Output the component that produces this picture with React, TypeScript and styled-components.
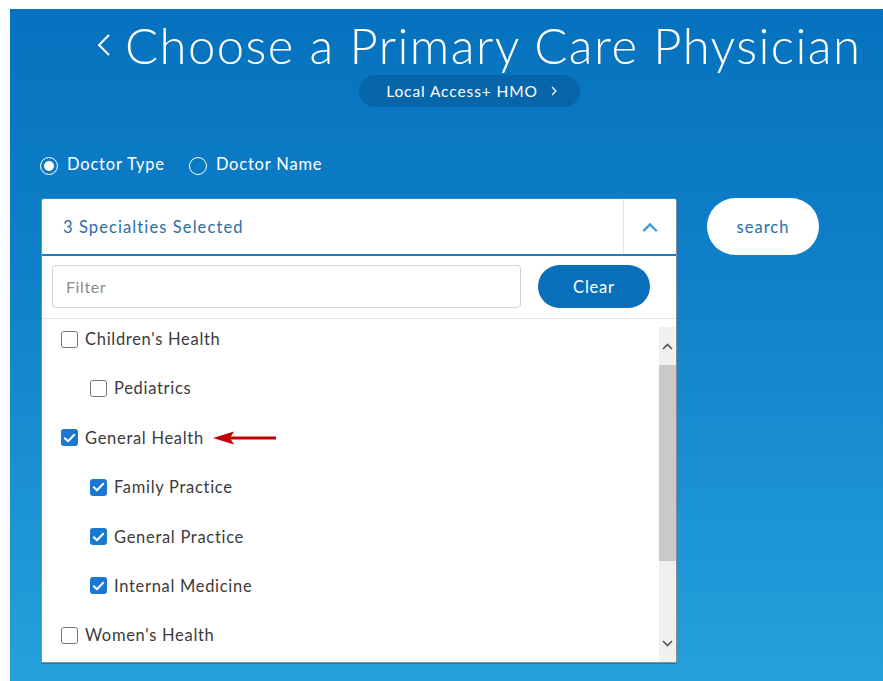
import React from "react";
import styled, { createGlobalStyle } from "styled-components";

const GlobalStyle = createGlobalStyle`
  html, body { margin: 0; padding: 0; background: #ffffff; }
  body { font-family: "Lato", "Open Sans", "Liberation Sans", sans-serif; }
  * { box-sizing: border-box; }
`;

const Page = styled.div`
  width: 883px;
  height: 681px;
  padding: 9px 0 0 10px;
  overflow: hidden;
`;

const Panel = styled.main`
  width: 873px;
  height: 672px;
  background: linear-gradient(180deg, #0672bf 0%, #0f80c9 40%, #26a1dc 100%);
  display: flex;
  flex-direction: column;
  align-items: flex-start;
  color: #ffffff;
  font-size: 16.5px;
  letter-spacing: 0.8px;
`;

const TitleRow = styled.h1`
  margin: 8px 0 0 87px;
  display: flex;
  align-items: center;
  gap: 14px;
  font-family: "Lato", "Open Sans", sans-serif;
  font-weight: 300;
  font-size: 49px;
  line-height: 56px;
  letter-spacing: 1.45px;
  white-space: nowrap;
`;

const PlanPill = styled.button`
  margin: 2px 0 0 349px;
  width: 221px;
  height: 32px;
  border: none;
  border-radius: 16px;
  background: #0765a9;
  color: #ffffff;
  font-family: "Lato", "Open Sans", sans-serif;
  font-size: 15.5px;
  letter-spacing: 0.9px;
  display: flex;
  align-items: center;
  justify-content: center;
  gap: 13px;
  padding: 0 0 0 4px;
`;

const RadioRow = styled.div`
  margin: 46px 0 0 30px;
  display: flex;
  align-items: center;
  gap: 24px;
`;

const RadioLabel = styled.label`
  display: flex;
  align-items: center;
  gap: 9px;
  color: #ffffff;
`;

const RadioMark = styled.span<{ $on?: boolean }>`
  width: 18px;
  height: 18px;
  margin-top: 4px;
  border-radius: 50%;
  border: 1.5px solid #ffffff;
  display: flex;
  align-items: center;
  justify-content: center;
  &::after {
    content: "";
    width: 10px;
    height: 10px;
    border-radius: 50%;
    background: ${(p) => (p.$on ? "#ffffff" : "transparent")};
  }
`;

const SearchRow = styled.div`
  margin: 23px 0 0 31px;
  display: flex;
  align-items: flex-start;
  gap: 30px;
`;

const Dropdown = styled.section`
  width: 636px;
  height: 465px;
  background: #ffffff;
  border: 1px solid #8a8f95;
  border-top-color: #2a86c8;
  border-radius: 3px 3px 0 0;
  display: flex;
  flex-direction: column;
  box-shadow: 0 1px 1px rgba(0, 0, 0, 0.25);
`;

const DropHeader = styled.div`
  height: 57px;
  display: flex;
  align-items: stretch;
  border-bottom: 2px solid #1b7cc4;
`;

const HeaderText = styled.div`
  flex: 1;
  display: flex;
  align-items: center;
  padding-left: 21px;
  color: #2a6ea5;
  letter-spacing: 1.1px;
`;

const Toggle = styled.div`
  width: 53px;
  display: flex;
  align-items: center;
  justify-content: center;
  border-left: 1px solid #e3e6ea;
`;

const FilterBar = styled.div`
  display: flex;
  align-items: center;
  gap: 17px;
  padding: 9px 26px 10px 10px;
  border-bottom: 1px solid #e2e5e8;
`;

const FilterInput = styled.input`
  width: 469px;
  height: 43px;
  border: 1px solid #cfd4d9;
  border-radius: 4px;
  padding: 0 13px;
  font-family: "Lato", "Open Sans", sans-serif;
  font-size: 16px;
  letter-spacing: 0.6px;
  color: #333;
  &::placeholder { color: #8a8d90; }
`;

const ClearButton = styled.button`
  width: 112px;
  height: 43px;
  border: none;
  border-radius: 22px;
  background: #0a6fba;
  color: #ffffff;
  font-family: "Lato", "Open Sans", sans-serif;
  font-size: 16.5px;
  letter-spacing: 0.8px;
`;

const ListArea = styled.div`
  flex: 1;
  margin-top: 8px;
  display: flex;
  min-height: 0;
`;

const List = styled.ul`
  flex: 1;
  margin: 0;
  padding: 0 0 0 19px;
  list-style: none;
  display: flex;
  flex-direction: column;
  gap: 25.4px;
`;

const Item = styled.li<{ $sub?: boolean }>`
  position: relative;
  height: 24px;
  display: flex;
  align-items: center;
  gap: 7px;
  padding-left: ${(p) => (p.$sub ? "29px" : "0")};
  color: #3b3b3b;
  letter-spacing: 0.7px;
`;

const Box = styled.span<{ $on?: boolean }>`
  width: 17px;
  height: 17px;
  border-radius: 3px;
  border: ${(p) => (p.$on ? "none" : "1.5px solid #767676")};
  background: ${(p) => (p.$on ? "#1a78d0" : "#ffffff")};
  display: flex;
  align-items: center;
  justify-content: center;
`;

const Annotation = styled.svg`
  position: absolute;
  left: 151px;
  top: 4px;
`;

const ScrollTrack = styled.div`
  width: 17px;
  background: #f0f0f0;
  display: flex;
  flex-direction: column;
`;

const ScrollArrow = styled.div`
  height: 38px;
  display: flex;
  align-items: center;
  justify-content: center;
`;

const ScrollThumb = styled.div`
  height: 196px;
  background: #c9c9c9;
`;

const Spacer = styled.div`
  flex: 1;
`;

const SearchButton = styled.button`
  width: 112px;
  height: 57px;
  border: none;
  border-radius: 29px;
  background: #ffffff;
  color: #2a6ea5;
  font-family: "Lato", "Open Sans", sans-serif;
  font-size: 16.5px;
  letter-spacing: 1px;
`;

const Check = () => (
  <svg width="13" height="10" viewBox="0 0 13 10">
    <path d="M1.8 5.2 L5 8.2 L11.2 1.8" fill="none" stroke="#fff" strokeWidth="2" strokeLinecap="round" strokeLinejoin="round" />
  </svg>
);

type Spec = { label: string; sub?: boolean; on?: boolean; flag?: boolean };

const specialties: Spec[] = [
  { label: "Children's Health" },
  { label: "Pediatrics", sub: true },
  { label: "General Health", on: true, flag: true },
  { label: "Family Practice", sub: true, on: true },
  { label: "General Practice", sub: true, on: true },
  { label: "Internal Medicine", sub: true, on: true },
  { label: "Women's Health" },
];

export default function App() {
  return (
    <>
      <GlobalStyle />
      <Page>
        <Panel>
          <TitleRow>
            <svg width="14" height="22" viewBox="0 0 14 22">
              <path d="M12 1 L2 11 L12 21" fill="none" stroke="#fff" strokeWidth="2" />
            </svg>
            Choose a Primary Care Physician
          </TitleRow>
          <PlanPill>
            Local Access+ HMO
            <svg width="6" height="10" viewBox="0 0 6 10">
              <path d="M1 1 L5 5 L1 9" fill="none" stroke="#fff" strokeWidth="1.2" />
            </svg>
          </PlanPill>
          <RadioRow>
            <RadioLabel>
              <RadioMark $on />
              Doctor Type
            </RadioLabel>
            <RadioLabel>
              <RadioMark />
              Doctor Name
            </RadioLabel>
          </RadioRow>
          <SearchRow>
            <Dropdown>
              <DropHeader>
                <HeaderText>3 Specialties Selected</HeaderText>
                <Toggle>
                  <svg width="16" height="10" viewBox="0 0 16 10">
                    <path d="M2 8.5 L8 2.5 L14 8.5" fill="none" stroke="#3f9ad8" strokeWidth="2.4" strokeLinecap="round" />
                  </svg>
                </Toggle>
              </DropHeader>
              <FilterBar>
                <FilterInput placeholder="Filter" />
                <ClearButton>Clear</ClearButton>
              </FilterBar>
              <ListArea>
                <List>
                  {specialties.map((s) => (
                    <Item key={s.label} $sub={s.sub}>
                      <Box $on={s.on}>{s.on && <Check />}</Box>
                      {s.label}
                      {s.flag && (
                        <Annotation width="66" height="16" viewBox="0 0 66 16">
                          <path d="M18 8 H64" stroke="#c00000" strokeWidth="3" />
                          <path d="M1 8 L22 1.5 L18 8 L22 14.5 Z" fill="#c00000" />
                        </Annotation>
                      )}
                    </Item>
                  ))}
                </List>
                <ScrollTrack>
                  <ScrollArrow>
                    <svg width="11" height="7" viewBox="0 0 11 7">
                      <path d="M1 6 L5.5 1.5 L10 6" fill="none" stroke="#555" strokeWidth="1.6" />
                    </svg>
                  </ScrollArrow>
                  <ScrollThumb />
                  <Spacer />
                  <ScrollArrow>
                    <svg width="11" height="7" viewBox="0 0 11 7">
                      <path d="M1 1 L5.5 5.5 L10 1" fill="none" stroke="#555" strokeWidth="1.6" />
                    </svg>
                  </ScrollArrow>
                </ScrollTrack>
              </ListArea>
            </Dropdown>
            <SearchButton>search</SearchButton>
          </SearchRow>
        </Panel>
      </Page>
    </>
  );
}
